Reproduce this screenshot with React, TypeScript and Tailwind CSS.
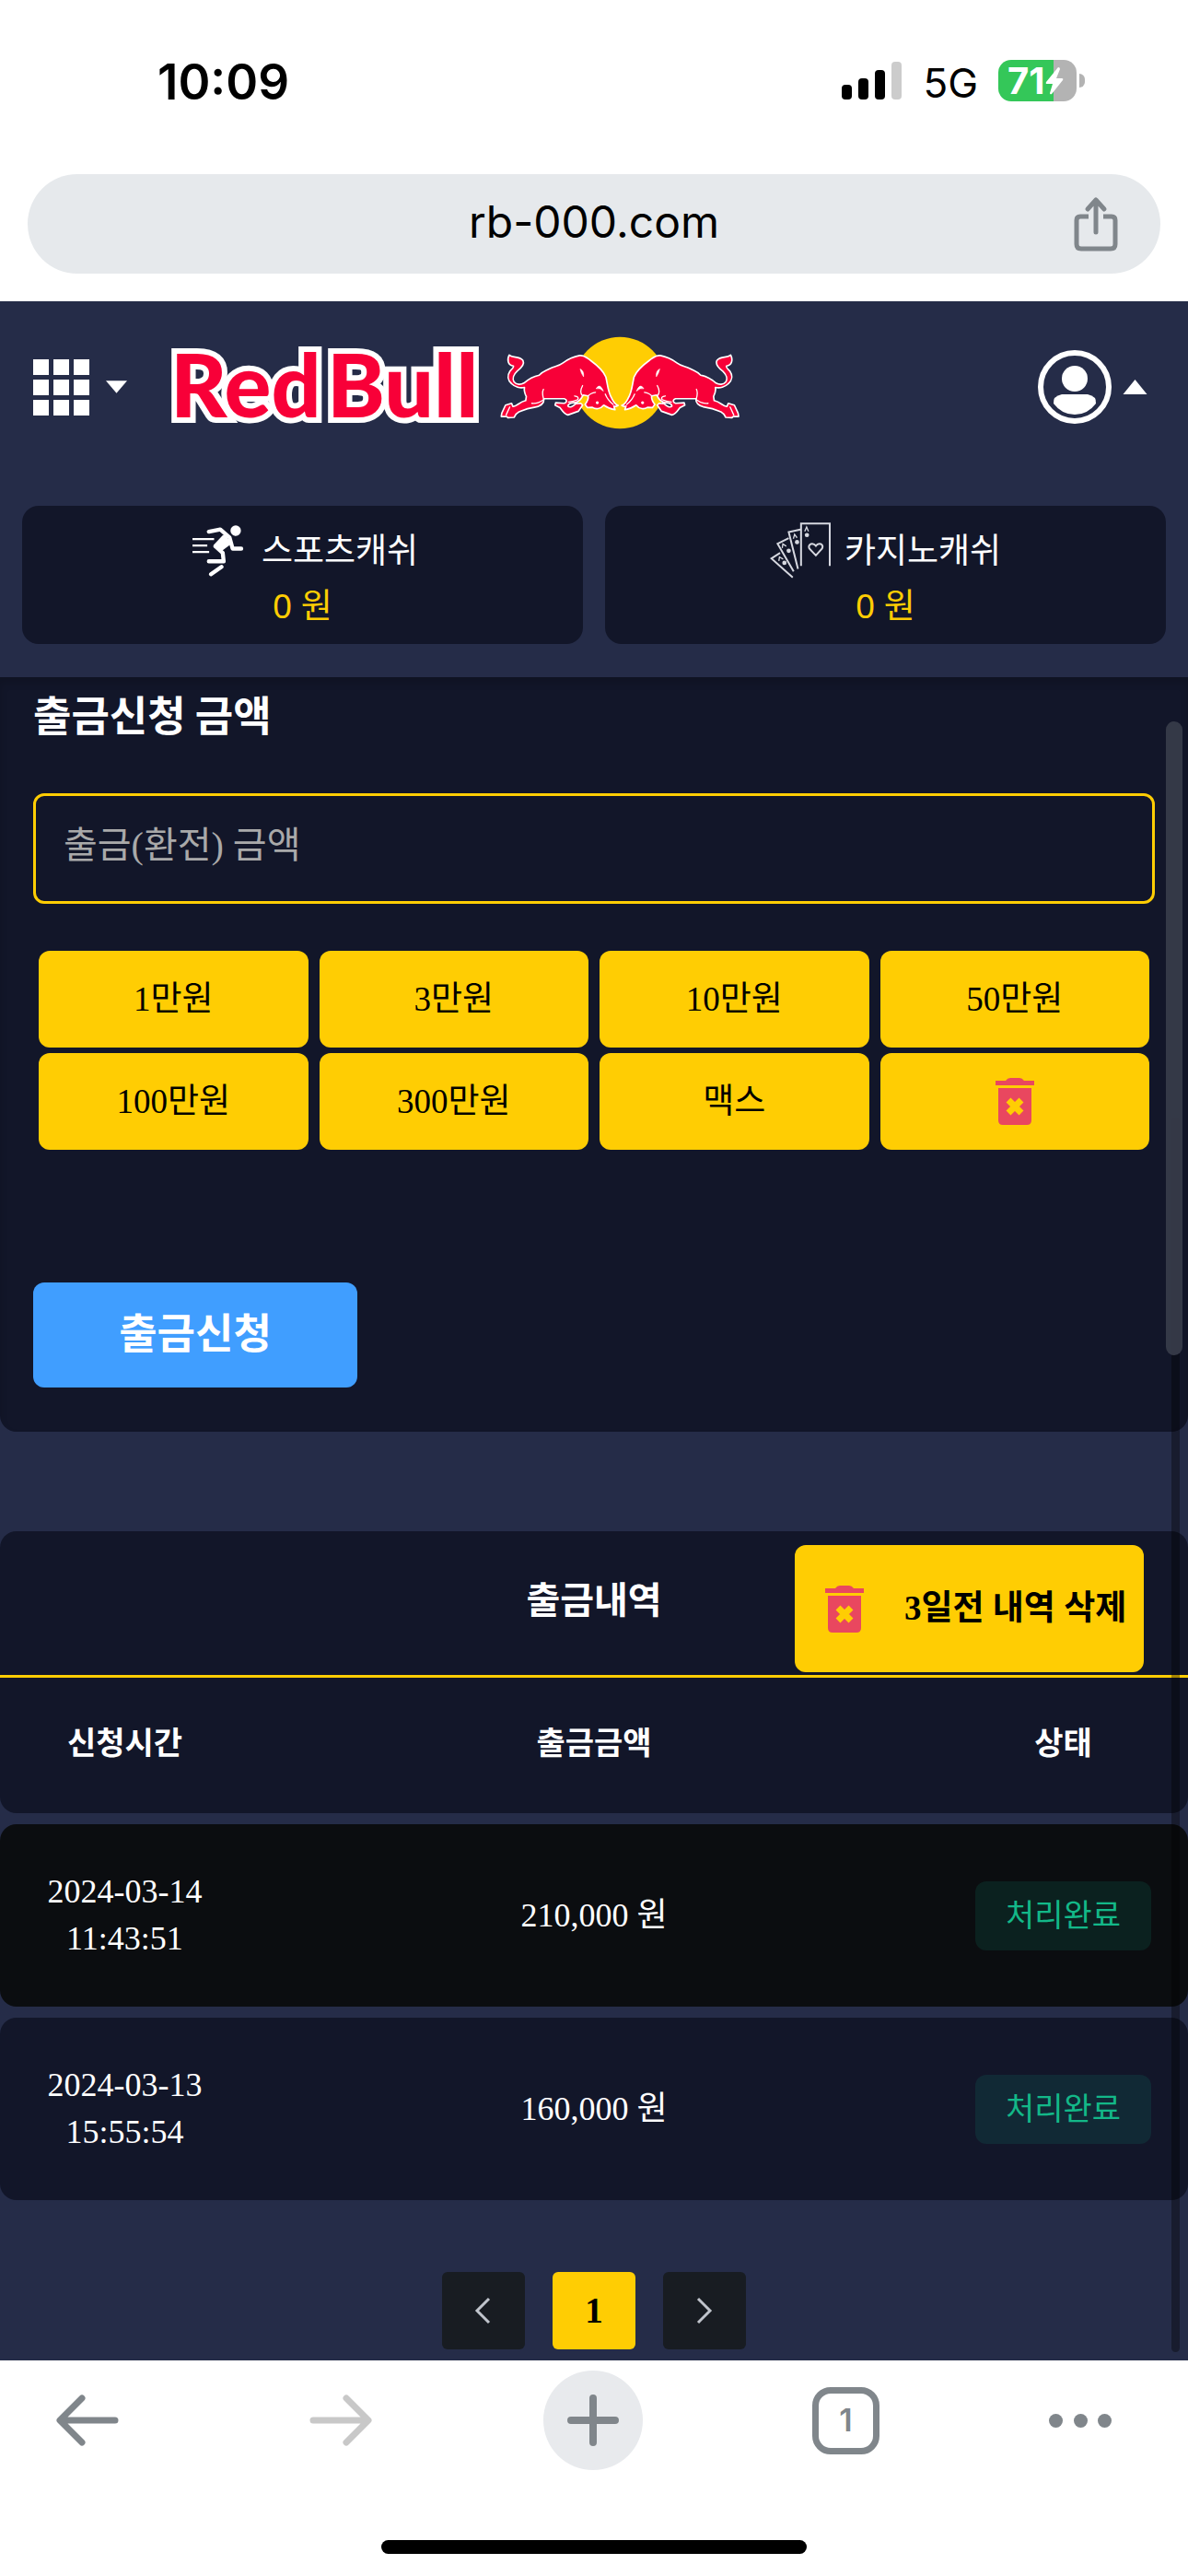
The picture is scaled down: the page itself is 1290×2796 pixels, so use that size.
import type { ReactNode } from "react";

const amounts = ["1만원", "3만원", "10만원", "50만원", "100만원", "300만원", "맥스"];

const history = [
  { date: "2024-03-14", time: "11:43:51", amount: "210,000", status: "처리완료", row: "bg-[#0b0d10]" },
  { date: "2024-03-13", time: "15:55:54", amount: "160,000", status: "처리완료", row: "bg-[#121629]" },
];

const columns = "grid grid-cols-[21%_58%_21%] items-center";

function StatusBar() {
  return (
    <div className="flex h-[171px] items-center justify-between pt-1 pr-[112px] pl-[171px] font-['Inter',sans-serif] text-black">
      <span className="pt-1 text-[53px] leading-none font-semibold">10:09</span>
      <div className="flex items-center gap-[22px]">
        <svg className="h-[42px] w-[66px]" viewBox="0 0 66 42" aria-hidden="true">
          <rect x="0" y="25" width="11" height="16" rx="4" />
          <rect x="18" y="18" width="11" height="23" rx="4" />
          <rect x="36" y="9" width="11" height="32" rx="4" />
          <rect x="54" y="0" width="11" height="41" rx="4" fill="#cccccc" />
        </svg>
        <span className="pt-1 text-[44px] leading-none">5G</span>
        <div className="flex items-center gap-[3px]">
          <div className="flex h-[45px] w-[85px] items-center rounded-[14px] bg-[linear-gradient(90deg,#34c759_71%,#b3b3b3_71%)] pl-[10px] text-white">
            <span className="text-[40px] leading-[45px] font-bold">71</span>
            <svg className="h-[30px] w-[20px] shrink-0" viewBox="0 0 20 30" fill="currentColor" aria-hidden="true">
              <path d="M14 0 L1 16 Q0 18 2 18 H8 L5 28 Q5 30 7 29 L19 14 Q20 12 18 12 H12 L16 2 Q16 0 14 0Z" />
            </svg>
          </div>
          <div className="h-[15px] w-[6px] rounded-r-full bg-[#b3b3b3]" />
        </div>
      </div>
    </div>
  );
}

function AddressBar() {
  return (
    <div className="mx-[30px] mt-[18px] mb-[30px] grid h-[108px] grid-cols-[1fr_auto_1fr] items-center rounded-full bg-[#e6e9ec] font-['Inter',sans-serif]">
      <span />
      <span className="pb-1 text-[48px] leading-none text-black">rb-000.com</span>
      <button type="button" aria-label="Share" className="mr-[45px] justify-self-end text-[#80868b]">
        <svg className="h-[60px] w-[50px]" viewBox="0 0 50 60" fill="none" stroke="currentColor" strokeWidth="5" strokeLinecap="round" strokeLinejoin="round">
          <path d="M25 39V5M16 14l9-10 9 10" />
          <path d="M17 22H8q-4 0-4 4v26q0 5 5 5h32q5 0 5-5V26q0-4-4-4h-9" strokeLinecap="butt" />
        </svg>
      </button>
    </div>
  );
}

function Bull() {
  return (
    <g>
      <path
        d="M158 134C170 146 190 136 203 152C210 166 196 178 184 187C172 198 168 212 174 222C182 232 196 232 206 226C222 212 236 204 256 200C266 189 278 186 290 179C306 170 318 172 334 160C350 148 366 140 388 136C404 134 412 144 424 152C446 168 466 186 474 206C480 230 480 256 494 277C500 289 506 296 514 299Q506 304 500 301L504 313C488 311 476 304 467 298C456 312 440 312 430 305L414 306L406 296C412 288 418 276 416 268L400 265C394 276 388 288 372 290C360 289 350 294 350 301C356 308 366 302 376 293L392 292L398 298L384 318L350 330C338 328 330 314 324 306L308 298L310 290L338 292C348 288 348 280 338 277L272 277C272 292 262 302 240 305C214 308 204 314 190 320C182 324 178 330 174 338L154 339L150 335L132 335L134 324L146 298L166 292L170 302C182 304 190 288 212 283L214 270C208 258 206 250 208 240C194 244 176 238 166 228C152 216 152 200 160 188C168 180 174 174 172 170C154 168 150 150 158 134Z"
        fill="#f80038"
        stroke="#fff"
        strokeWidth="5"
        strokeLinejoin="round"
      />
      <path
        d="M270 246Q264 258 271 280Q252 294 232 292M398 234Q386 256 398 268M372 268Q388 270 382 280Q370 286 352 288M472 262Q480 282 498 296M160 304L148 330M416 268Q424 258 440 256"
        fill="none"
        stroke="#fff"
        strokeWidth="4"
        strokeLinecap="round"
      />
      <path d="M390 180Q403 186 401 205Q394 196 390 180ZM442 244Q454 224 466 252Q454 240 442 244Z" fill="#fff" stroke="#fff" strokeWidth="2" />
      <circle cx="446" cy="290" r="5" fill="#fff" />
    </g>
  );
}

function Logo() {
  return (
    <a href="#" aria-label="Red Bull" className="flex items-center gap-4">
      <svg className="h-[140px] w-[340px]" viewBox="0 -20 340 140" aria-hidden="true">
        <g
          className="font-['Lato',sans-serif] text-[95px] font-black"
          fill="#f80038"
          stroke="#fff"
          strokeWidth="12"
          style={{ paintOrder: "stroke" }}
        >
          <text x="-1" y="88">Red</text>
          <text x="169" y="88">Bull</text>
        </g>
      </svg>
      <svg className="h-[103px] w-[263px]" viewBox="126 70 790 310" aria-hidden="true">
        <circle cx="520" cy="225" r="150" fill="#ffcd03" />
        <Bull />
        <g transform="translate(1040 0) scale(-1 1)">
          <Bull />
        </g>
      </svg>
    </a>
  );
}

function Header() {
  return (
    <header className="flex h-[186px] items-center px-9">
      <button type="button" aria-label="메뉴" className="flex items-center gap-[18px] text-white">
        <svg className="size-[61px]" viewBox="0 0 61 61" fill="currentColor">
          {[0, 22, 44].map((y) =>
            [0, 22, 44].map((x) => <rect key={`${x}-${y}`} x={x} y={y} width="17" height="17" />),
          )}
        </svg>
        <svg className="h-[14px] w-[23px]" viewBox="0 0 24 14" fill="currentColor">
          <path d="M0 0H24L12 14Z" />
        </svg>
      </button>
      <div className="mb-[10px] ml-12">
        <Logo />
      </div>
      <button type="button" aria-label="내 정보" className="ml-auto flex items-center gap-3 pr-2 text-white">
        <svg className="size-20" viewBox="0 0 80 80" fill="currentColor">
          <circle cx="40" cy="40" r="37" fill="none" stroke="currentColor" strokeWidth="6" />
          <circle cx="40" cy="31" r="14" />
          <path d="M26 48H54Q64 50 63 58Q54 70 40 70Q26 70 17 58Q16 50 26 48Z" />
        </svg>
        <svg className="h-[16px] w-[27px]" viewBox="0 0 26 16" fill="currentColor">
          <path d="M0 16H26L13 0Z" />
        </svg>
      </button>
    </header>
  );
}

function RunnerIcon() {
  return (
    <svg className="h-[57px] w-[67px]" viewBox="85 55 170 170" fill="none" stroke="#fff" strokeWidth="13" strokeLinecap="round" strokeLinejoin="round" aria-hidden="true">
      <circle cx="228" cy="76" r="17" fill="#fff" stroke="none" />
      <path d="M141 79L178 72L208 98L218 134H246" />
      <path d="M196 98L163 127L186 148L189 175H141M182 193L148 217" />
      <path d="M190 96L206 116L182 134L162 126Z" fill="#fff" />
      <path d="M88 103H158M88 124H136M88 145H142" strokeWidth="7" strokeLinecap="butt" />
    </svg>
  );
}

function CardsIcon() {
  return (
    <svg className="h-[62px] w-[67px]" viewBox="55 50 200 185" fill="none" stroke="#d6d8e0" strokeWidth="6" aria-hidden="true">
      <path d="M156 194V57H249V194" />
      <path d="M154 76L116 84L146 204M116 104L80 122L132 212M88 152L60 170L129 231" />
      <path d="M204 160L183 138Q178 128 188 123Q197 120 204 129Q210 120 220 123Q229 128 224 138Z" strokeWidth="6" />
      <path d="M168 82L174 68L180 82M131 106L135 92L143 103M95 136L97 123L108 130M84 178L86 165L98 172" strokeWidth="4" />
      <g fill="#d6d8e0" stroke="none">
        <circle cx="175" cy="94" r="7" />
        <circle cx="143" cy="117" r="7" />
        <circle cx="116" cy="145" r="7" />
        <circle cx="102" cy="184" r="7" />
      </g>
    </svg>
  );
}

function CashCard({ icon, label }: { icon: ReactNode; label: string }) {
  return (
    <div className="flex-1 rounded-[18px] bg-[#121629] pt-[18px] pb-3 text-center font-['Noto_Sans','Noto_Sans_CJK_KR',sans-serif] text-[37px] leading-[60px]">
      <div className="flex h-[60px] items-center justify-center gap-[14px] text-white">
        {icon}
        <span>{label}</span>
      </div>
      <p className="text-[#ffcd03]">0 원</p>
    </div>
  );
}

function TrashIcon() {
  return (
    <svg className="h-[51px] w-[42px] shrink-0" viewBox="0 0 42 51" aria-hidden="true">
      <path d="M0 3H11Q13 0 16 0H26Q29 0 31 3H42V8H0ZM3 11H39V46Q39 51 34 51H8Q3 51 3 46Z" fill="#e9475f" />
      <path d="M14 24L28 38M28 24L14 38" stroke="#ffcd03" strokeWidth="7" />
    </svg>
  );
}

function WithdrawForm() {
  return (
    <form className="rounded-b-[18px] bg-[#121629] px-9 pt-[10px] pb-12 shadow-[inset_0_6px_8px_rgba(0,0,0,0.15)]">
      <label htmlFor="amount" className="block font-['Noto_Sans_CJK_KR',sans-serif] text-[45px] leading-[60px] font-bold text-white">
        출금신청 금액
      </label>
      <input
        id="amount"
        type="text"
        placeholder="출금(환전) 금액"
        className="mt-14 block h-[120px] w-full rounded-xl border-3 border-[#ffcd03] bg-transparent px-[30px] pb-2 text-[40px] text-white outline-none placeholder:text-[#a9a9a9]"
      />
      <div className="mx-[6px] mt-[51px] grid grid-cols-4 gap-x-3 gap-y-[6px] text-[37px] text-black">
        {amounts.map((amount) => (
          <button key={amount} type="button" className="h-[105px] rounded-xl bg-[#ffcd03]">
            {amount}
          </button>
        ))}
        <button type="button" aria-label="지우기" className="flex h-[105px] items-center justify-center rounded-xl bg-[#ffcd03]">
          <TrashIcon />
        </button>
      </div>
      <button type="submit" className="mt-36 h-[114px] w-[352px] rounded-xl bg-[#409eff] pb-2 font-['Noto_Sans_CJK_KR',sans-serif] text-[45px] font-bold text-white">
        출금신청
      </button>
    </form>
  );
}

function HistoryTable() {
  return (
    <section className="mt-[108px]">
      <div className="grid h-[159px] grid-cols-3 items-center rounded-t-[18px] border-b-3 border-[#ffcd03] bg-[#121629]">
        <h2 className="col-start-2 pb-1 text-center text-[40px] leading-[60px] font-bold text-white">출금내역</h2>
        <button type="button" className="mt-3 mr-12 flex h-[138px] w-[379px] items-center gap-11 justify-self-end rounded-xl bg-[#ffcd03] pl-[33px] text-[37px] font-bold whitespace-nowrap text-black">
          <TrashIcon />
          3일전 내역 삭제
        </button>
      </div>
      <table className="block w-full text-center text-[36px] leading-[51px] text-white">
        <thead className="block">
          <tr className={`${columns} h-[147px] rounded-b-[18px] bg-[#121629] pb-1 text-[34px]`}>
            <th>신청시간</th>
            <th>출금금액</th>
            <th>상태</th>
          </tr>
        </thead>
        <tbody className="mt-3 grid gap-3">
          {history.map((item) => (
            <tr key={item.date} className={`${columns} h-[198px] rounded-[18px] ${item.row}`}>
              <td>
                {item.date}
                <br />
                {item.time}
              </td>
              <td>{item.amount} 원</td>
              <td>
                <span className="inline-block rounded-xl bg-[#13b888]/12 px-[33px] py-3 text-[34px] text-[#13b888]">
                  {item.status}
                </span>
              </td>
            </tr>
          ))}
        </tbody>
      </table>
    </section>
  );
}

function Pagination() {
  const side = "flex h-[84px] w-[90px] items-center justify-center rounded-md bg-[#181c22] text-[#c0c4cc]";

  return (
    <nav className="mt-[78px] mb-3 flex justify-center gap-[30px]">
      <button type="button" aria-label="이전" className={side}>
        <svg className="h-[30px] w-[20px]" viewBox="0 0 20 30" fill="none" stroke="currentColor" strokeWidth="3">
          <path d="M16 2L3 15L16 28" />
        </svg>
      </button>
      <button type="button" className="h-[84px] w-[90px] rounded-md bg-[#ffcd03] text-[39px] font-bold text-black">
        1
      </button>
      <button type="button" aria-label="다음" className={side}>
        <svg className="h-[30px] w-[20px]" viewBox="0 0 20 30" fill="none" stroke="currentColor" strokeWidth="3">
          <path d="M3 2L16 15L3 28" />
        </svg>
      </button>
    </nav>
  );
}

function BrowserToolbar() {
  const item = "flex h-[108px] w-[108px] items-center justify-center rounded-full";

  return (
    <footer className="mt-auto bg-white pt-[11px] pb-6 font-['Inter',sans-serif] text-[#80868b]">
      <div className="flex items-center justify-between pr-[83px] pl-[41px]">
        <button type="button" aria-label="Back" className={item}>
          <svg className="h-[56px] w-[68px]" viewBox="0 0 68 56" fill="none" stroke="currentColor" strokeWidth="7" strokeLinecap="round" strokeLinejoin="round">
            <path d="M64 28H5M28 4L4 28L28 52" />
          </svg>
        </button>
        <button type="button" aria-label="Forward" className={`${item} text-[#c8c8c8]`}>
          <svg className="h-[56px] w-[68px]" viewBox="0 0 68 56" fill="none" stroke="currentColor" strokeWidth="7" strokeLinecap="round" strokeLinejoin="round">
            <path d="M4 28H63M40 4L64 28L40 52" />
          </svg>
        </button>
        <button type="button" aria-label="New tab" className={`${item} bg-[#e8eaed]`}>
          <svg className="size-[56px]" viewBox="0 0 56 56" stroke="currentColor" strokeWidth="8" strokeLinecap="round">
            <path d="M28 4V52M4 28H52" />
          </svg>
        </button>
        <button type="button" aria-label="Tabs" className={item}>
          <span className="flex size-[73px] items-center justify-center rounded-[20px] border-7 border-current text-[34px] leading-none font-semibold">1</span>
        </button>
        <button type="button" aria-label="More" className="flex h-[108px] w-[68px] items-center justify-between">
          <i className="size-[15px] rounded-full bg-current" />
          <i className="size-[15px] rounded-full bg-current" />
          <i className="size-[15px] rounded-full bg-current" />
        </button>
      </div>
      <div className="mx-auto mt-[76px] h-[15px] w-[462px] rounded-full bg-black" />
    </footer>
  );
}

export default function App() {
  return (
    <div className="flex min-h-screen flex-col bg-white font-['Liberation_Serif','Noto_Sans_CJK_KR',serif]">
      <StatusBar />
      <AddressBar />
      <main className="relative bg-[#252c48]">
        <Header />
        <div className="flex gap-6 px-6 pt-9 pb-9">
          <CashCard icon={<RunnerIcon />} label="스포츠캐쉬" />
          <CashCard icon={<CardsIcon />} label="카지노캐쉬" />
        </div>
        <WithdrawForm />
        <HistoryTable />
        <Pagination />
        {/* scroll thumbs of the page and of the inner panel */}
        <div className="absolute top-[886px] right-[9px] bottom-[9px] w-[9px] rounded-full bg-black/35" />
        <div className="absolute top-[456px] right-[6px] h-[688px] w-[18px] rounded-full bg-[#373b49]/95" />
      </main>
      <BrowserToolbar />
    </div>
  );
}
